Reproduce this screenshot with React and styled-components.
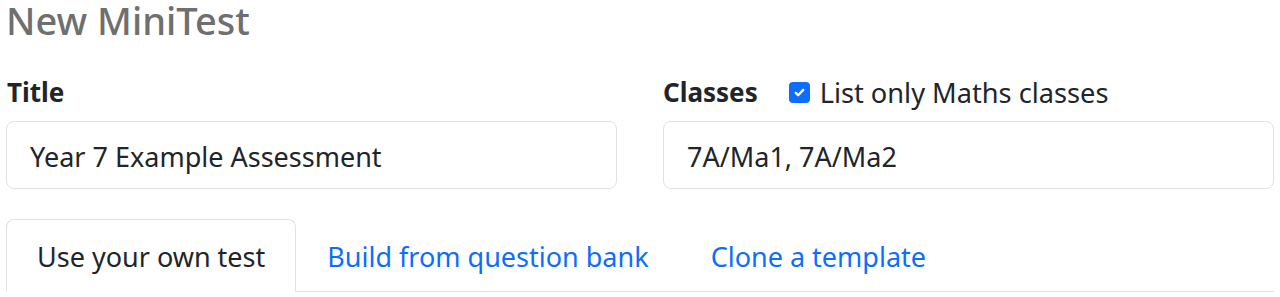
import React from "react";
import styled, { createGlobalStyle } from "styled-components";

const GlobalStyle = createGlobalStyle`
  html, body { margin: 0; padding: 0; background: #fff; }
  body {
    font-family: "Noto Sans", "Open Sans", sans-serif;
    color: #212529;
  }
  * { box-sizing: border-box; }
`;

const Page = styled.div`
  padding: 0 6px 0 6px;
  width: 1280px;
  overflow: hidden;
`;

const Heading = styled.h2`
  margin: 0;
  font-size: 38px;
  line-height: 40px;
  font-weight: 500;
  color: #6f6f6f;
`;

const FormRow = styled.div`
  display: grid;
  grid-template-columns: 611px 611px;
  column-gap: 46px;
  margin-top: 33px;
`;

const Field = styled.div`
  display: flex;
  flex-direction: column;
`;

const LabelRow = styled.div`
  display: flex;
  align-items: center;
  height: 39px;
  margin-bottom: 9px;
`;

const Label = styled.label`
  font-size: 26px;
  line-height: 39px;
  font-weight: 700;
  color: #212529;
  margin-left: ${(p) => p.$offset || 0}px;
`;

const CheckLabel = styled.label`
  display: flex;
  align-items: center;
  gap: 10px;
  margin-left: 31px;
  font-size: 27.2px;
  line-height: 39px;
  color: #212529;
`;

const Box = styled.span`
  width: 21px;
  height: 21px;
  border-radius: 4px;
  background: #0d6efd;
  display: inline-flex;
  align-items: center;
  justify-content: center;
  flex: none;
`;

const Input = styled.input`
  height: 68px;
  width: 100%;
  border: 1px solid #dee2e6;
  border-radius: 8px;
  padding: 2px 23px 0;
  font-family: inherit;
  font-size: 27px;
  color: #212529;
  background: #fff;
  outline: none;
`;

const TabNav = styled.nav`
  display: flex;
  margin-top: 30px;
  border-bottom: 1px solid #dee2e6;
  width: 1268px;
`;

const Tab = styled.a`
  display: block;
  padding: 17px 30px 15px;
  font-size: 27px;
  line-height: 39px;
  border: 1px solid transparent;
  border-radius: 8px 8px 0 0;
  margin-bottom: -1px;
  text-decoration: none;
  color: ${(p) => (p.$active ? "#212529" : "#0d6efd")};
  background: ${(p) => (p.$active ? "#fff" : "transparent")};
  border-color: ${(p) =>
    p.$active ? "#dee2e6 #dee2e6 #fff" : "transparent"};
  cursor: pointer;
`;

export default function App() {
  return (
    <>
      <GlobalStyle />
      <Page>
        <Heading>New MiniTest</Heading>
        <FormRow>
          <Field>
            <LabelRow>
              <Label $offset={1}>Title</Label>
            </LabelRow>
            <Input defaultValue="Year 7 Example Assessment" />
          </Field>
          <Field>
            <LabelRow>
              <Label>Classes</Label>
              <CheckLabel>
                <Box>
                  <svg width="15" height="15" viewBox="0 0 20 20">
                    <path
                      d="M5 10.5l3.2 3.2L15 6.5"
                      fill="none"
                      stroke="#fff"
                      strokeWidth="3"
                      strokeLinecap="round"
                      strokeLinejoin="round"
                    />
                  </svg>
                </Box>
                List only Maths classes
              </CheckLabel>
            </LabelRow>
            <Input defaultValue="7A/Ma1, 7A/Ma2" />
          </Field>
        </FormRow>
        <TabNav>
          <Tab $active>Use your own test</Tab>
          <Tab>Build from question bank</Tab>
          <Tab>Clone a template</Tab>
        </TabNav>
      </Page>
    </>
  );
}
